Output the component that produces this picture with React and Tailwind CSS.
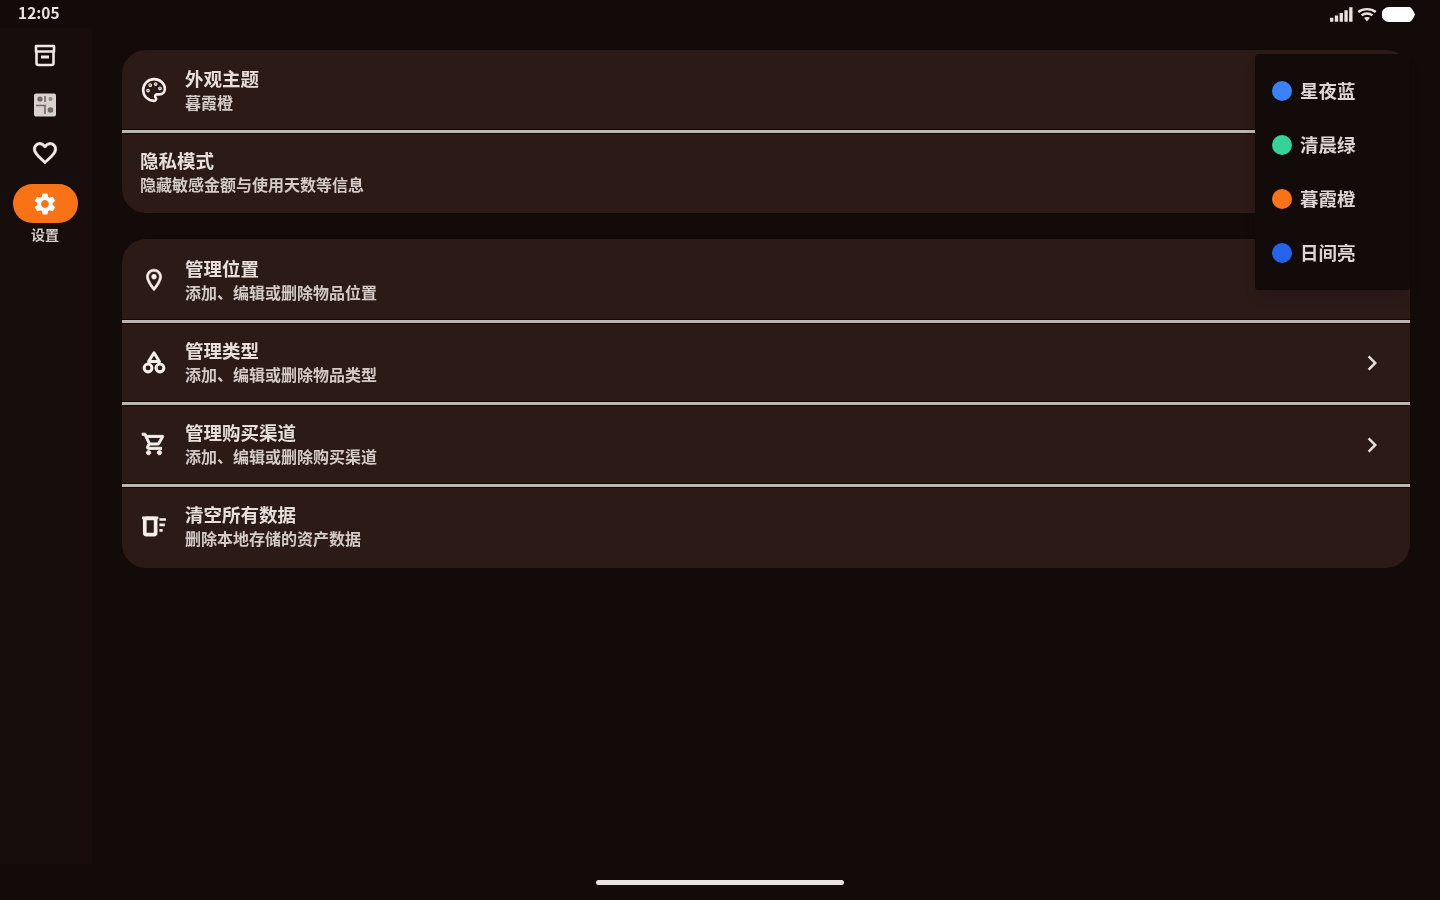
import React from 'react';
import { Palette } from 'lucide-react';
import { MdSettings, MdChevronRight } from 'react-icons/md';

const themes = [
  { name: '星夜蓝', dot: 'bg-[#3b82f6]' },
  { name: '清晨绿', dot: 'bg-[#34d399]' },
  { name: '暮霞橙', dot: 'bg-[#f97316]' },
  { name: '日间亮', dot: 'bg-[#2563eb]' },
];

const BoxIcon = ({ className }) => (
  <svg viewBox="0 0 24 24" className={className} fill="none" stroke="currentColor" strokeWidth="2.6">
    <path d="M3 2.500h18v5.500H3z" strokeLinejoin="round" />
    <path d="M3.500 8v11.500a2 2 0 0 0 2 2h13a2 2 0 0 0 2-2V8" />
    <path d="M8 13.500h8" strokeWidth="3" />
  </svg>
);

const WidgetIcon = ({ className }) => (
  <svg viewBox="0 0 24 24" className={className}>
    <rect x="1" y="0.500" width="22" height="23" rx="2" fill="#d8d2ce" />
    <circle cx="7" cy="6" r="2.600" fill="#6f6865" />
    <circle cx="17.500" cy="6" r="2" fill="#8f8885" />
    <circle cx="17.500" cy="17" r="2.800" fill="#6f6865" />
    <path d="M3 12.500h10M12 3v6M12 13v8" stroke="#6f6865" strokeWidth="1.600" />
  </svg>
);

const HeartIcon = ({ className }) => (
  <svg viewBox="0 0 24 24" className={className} fill="currentColor" stroke="currentColor" strokeWidth="0.6">
    <path d="M16.500 3c-1.740 0-3.410.810-4.500 2.090C10.910 3.810 9.240 3 7.500 3 4.420 3 2 5.420 2 8.500c0 3.780 3.400 6.860 8.550 11.540L12 21.350l1.450-1.320C18.600 15.360 22 12.280 22 8.500 22 5.420 19.580 3 16.500 3zm-4.400 15.550l-.1.100-.1-.1C7.140 14.240 4 11.390 4 8.500 4 6.500 5.500 5 7.500 5c1.540 0 3.040.990 3.570 2.360h1.870C13.460 5.990 14.960 5 16.500 5c2 0 3.500 1.500 3.500 3.500 0 2.890-3.140 5.740-7.900 10.050z" />
  </svg>
);

const PinIcon = ({ className }) => (
  <svg viewBox="0 0 24 24" className={className} fill="currentColor" stroke="currentColor" strokeWidth="0.6">
    <path d="M12 2C8.130 2 5 5.130 5 9c0 5.250 7 13 7 13s7-7.750 7-13c0-3.870-3.130-7-7-7zm0 17c-2.500-3.200-5-7.200-5-10 0-2.760 2.240-5 5-5s5 2.240 5 5c0 2.880-2.880 7.190-5 10z" />
    <circle cx="12" cy="9" r="2.200" />
  </svg>
);

const CartIcon = ({ className }) => (
  <svg viewBox="0 0 24 24" className={className} fill="currentColor" stroke="currentColor" strokeWidth="0.8">
    <path d="M15.550 13c.750 0 1.410-.410 1.750-1.030l3.580-6.490A.996.996 0 0 0 20.010 4H5.210l-.940-2H1v2h2l3.600 7.590-1.350 2.440C4.520 15.370 5.480 17 7 17h12v-2H7l1.100-2h7.450zM6.160 6h12.150l-2.760 5H8.530L6.160 6zM7 18c-1.100 0-1.990.900-1.990 2S5.900 22 7 22s2-.900 2-2-.900-2-2-2zm10 0c-1.100 0-1.990.900-1.990 2s.890 2 1.990 2 2-.900 2-2-.900-2-2-2z" />
  </svg>
);

const ShapesIcon = ({ className }) => (
  <svg viewBox="0 0 24 24" className={className} fill="none" stroke="currentColor" strokeWidth="2.800">
    <path d="M12 3.500 7 11.500h10z" strokeLinejoin="round" />
    <circle cx="6.500" cy="17.500" r="3.600" />
    <circle cx="17.500" cy="17.500" r="3.600" />
  </svg>
);

const SweepIcon = ({ className }) => (
  <svg viewBox="0 0 24 24" className={className} fill="none" stroke="currentColor">
    <path d="M1 4.500h15" strokeWidth="2.600" />
    <rect x="3.500" y="5" width="10" height="15" rx="1.500" strokeWidth="3.400" />
    <path d="M17 6h6M17 11h5M17 16h3" strokeWidth="2.400" />
  </svg>
);

const PaletteIcon = ({ className }) => <Palette className={className} strokeWidth={2.4} />;

const Row = ({ icon: Icon, title, sub, arrow = true }) => (
  <div className="h-[79px] flex items-center pl-[18px] pr-[23px] pb-[2px]">
    {Icon && <Icon className="w-[26px] h-[26px] text-[#f5efec] ml-[1px] mr-[18px] shrink-0" />}
    <div className="flex-1">
      <div className="text-[18.5px] leading-[24px] font-bold text-[#e6dfdb]">{title}</div>
      <div className="text-[16px] leading-[24px] font-bold text-[#d3cbc7]">{sub}</div>
    </div>
    {arrow && <MdChevronRight className="w-[30px] h-[30px] text-[#e6dfdb] mt-[2px]" />}
  </div>
);

const Sep = () => <div className="h-[3px] bg-[#bcb6b2] shadow-[0_0_0_1px_#120908]" />;

const App = () => (
  <div
    className="w-[1440px] h-[900px] relative flex flex-col overflow-hidden bg-[#130a0a] blur-[0.6px]"
    style={{ fontFamily: '"Noto Sans CJK SC", "Noto Sans", sans-serif' }}
  >
    <div className="h-[28px] flex items-center justify-between pl-[18px] pr-[25px] text-[#e8e3e0]">
      <span className="text-[15.5px] font-bold mb-[3px]">12:05</span>
      <div className="flex items-center gap-[4px]">
        <svg viewBox="0 0 24 15" className="w-[23px] h-[15px]" fill="currentColor">
          <path d="M0 11h3.500v4H0zM5 8.500h3.500V15H5zM10 6h3.500v9H10zM15 3h3.500v12H15zM20 0h3.500v15H20z" />
        </svg>
        <svg viewBox="0 0 24 18" className="w-[20px] h-[15px]" fill="none" stroke="currentColor" strokeWidth="2.800">
          <path d="M1.500 6C7 1.500 17 1.500 22.500 6M5.500 10c3.500-3 9.500-3 13 0" />
          <path d="M12 17.500 8.500 13c2-1.400 5-1.400 7 0z" fill="currentColor" stroke="none" />
        </svg>
        <svg viewBox="0 0 33 15" className="w-[33px] h-[15px] ml-[1px]" fill="#ffffff">
          <path d="M7 0h20c2 0 3.500 2 6 7.500-2.500 5.500-4 7.500-6 7.500H7a7 7 0 0 1 0-15z" />
        </svg>
      </div>
    </div>

    <div className="flex-1 flex">
      <aside className="w-[92px] bg-[#160d0c] flex flex-col items-center pt-[15px] pr-[2px]">
        <BoxIcon className="w-[24px] h-[25px] text-[#efe9e6]" />
        <WidgetIcon className="w-[24px] h-[24px] mt-[25px]" />
        <HeartIcon className="w-[28px] h-[28px] text-[#f2ecea] mt-[22px]" />
        <div className="w-[65px] h-[39px] rounded-full bg-[#f97316] flex items-center justify-center mt-[17px]">
          <MdSettings className="w-[26px] h-[26px] text-white" />
        </div>
        <div className="text-[14px] leading-[22px] font-bold text-[#d3cbc7]">设置</div>
      </aside>

      <main className="flex-1 pl-[30px] pr-[30px] pt-[22px] flex flex-col gap-[26px]">
        <div className="rounded-[24px] bg-[#2c1a17] overflow-hidden pt-[1px] pb-[1px]">
          <Row icon={PaletteIcon} title="外观主题" sub="暮霞橙" />
          <Sep />
          <Row title="隐私模式" sub="隐藏敏感金额与使用天数等信息" arrow={false} />
        </div>
        <div className="rounded-[24px] bg-[#2c1a17] overflow-hidden pt-[2px] pb-[2px]">
          <Row icon={PinIcon} title="管理位置" sub="添加、编辑或删除物品位置" />
          <Sep />
          <Row icon={ShapesIcon} title="管理类型" sub="添加、编辑或删除物品类型" />
          <Sep />
          <Row icon={CartIcon} title="管理购买渠道" sub="添加、编辑或删除购买渠道" />
          <Sep />
          <Row icon={SweepIcon} title="清空所有数据" sub="删除本地存储的资产数据" arrow={false} />
        </div>
      </main>
    </div>

    <div className="h-[36px] flex items-center justify-center">
      <div className="w-[248px] h-[5px] rounded-full bg-[#e8e3e0]" />
    </div>

    {/* theme dropdown */}
    <div className="absolute top-[54px] left-[1255px] w-[155px] h-[236px] bg-[#130a0a] rounded-[4px] py-[10px] flex flex-col shadow-lg">
      {themes.map((t) => (
        <div key={t.name} className="h-[54px] flex items-center pl-[17px] gap-[8px]">
          <div className={`w-[20px] h-[20px] rounded-full ${t.dot}`} />
          <span className="text-[18.5px] font-bold text-[#dcd6d2]">{t.name}</span>
        </div>
      ))}
    </div>
  </div>
);

export default App;
